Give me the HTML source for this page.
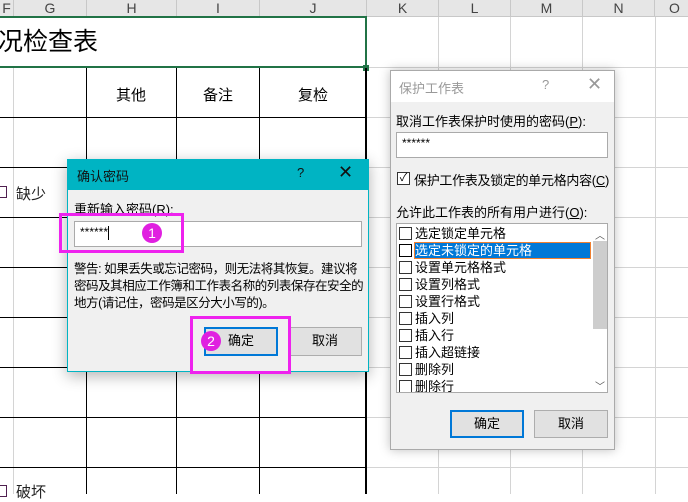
<!DOCTYPE html>
<html><head><meta charset="utf-8"><style>
*{margin:0;padding:0;box-sizing:border-box}
body{width:688px;height:494px;overflow:hidden;background:#fff;position:relative;font-family:"Liberation Sans","Noto Sans CJK SC",sans-serif;font-size:13px;color:#000}
.a{position:absolute;white-space:nowrap}
.hdr{position:absolute;top:0;height:17px;background:#e6e6e6;border-bottom:1px solid #c8c8c8;border-right:1px solid #c8c8c8;text-align:center;font-size:14px;line-height:17px;color:#444}
.vg{position:absolute;width:1px;background:#d4d4d4}
.hg{position:absolute;height:1px;background:#d4d4d4}
.vb{position:absolute;width:1px;background:#000}
.hb{position:absolute;height:1px;background:#000}
.btn{position:absolute;background:#e1e1e1;border:1px solid #adadad;text-align:center;line-height:26px;font-size:13px}
.btn.def{border:2px solid #0078d7;line-height:24px}
.cb{position:absolute;width:13px;height:13px;border:1px solid #333;background:#fff}
.li{position:absolute;left:0;height:17px;width:200px;line-height:17px;font-size:13px}
.pink{position:absolute;border:3px solid #ee22ee}
.num{position:absolute;width:20px;height:20px;border-radius:50%;background:#e020e0;color:#fff;text-align:center;line-height:20px;font-size:14px}
</style></head><body>
<div class="hdr" style="left:0;width:14px">F</div>
<div class="hdr" style="left:14px;width:73px">G</div>
<div class="hdr" style="left:87px;width:90px">H</div>
<div class="hdr" style="left:177px;width:83px">I</div>
<div class="hdr" style="left:260px;width:107px">J</div>
<div class="hdr" style="left:367px;width:72px">K</div>
<div class="hdr" style="left:439px;width:72px">L</div>
<div class="hdr" style="left:511px;width:72px">M</div>
<div class="hdr" style="left:583px;width:72px">N</div>
<div class="hdr" style="left:655px;width:40px">O</div>
<div class="vg" style="left:13px;top:68px;height:426px"></div>
<div class="vg" style="left:438px;top:17px;height:477px"></div>
<div class="vg" style="left:510px;top:17px;height:477px"></div>
<div class="vg" style="left:582px;top:17px;height:477px"></div>
<div class="vg" style="left:655px;top:17px;height:477px"></div>
<div class="hg" style="left:367px;top:67px;width:321px"></div>
<div class="hg" style="left:367px;top:117px;width:321px"></div>
<div class="hg" style="left:367px;top:167px;width:321px"></div>
<div class="hg" style="left:367px;top:217px;width:321px"></div>
<div class="hg" style="left:367px;top:267px;width:321px"></div>
<div class="hg" style="left:367px;top:317px;width:321px"></div>
<div class="hg" style="left:367px;top:367px;width:321px"></div>
<div class="hg" style="left:367px;top:417px;width:321px"></div>
<div class="hg" style="left:367px;top:467px;width:321px"></div>
<div class="a" style="left:-2px;top:27px;font-size:25px;line-height:30px">况检查表</div>
<div class="a" style="left:0;top:16px;width:367px;height:52px;border:2px solid #217346;border-left:none"></div>
<div class="a" style="left:363px;top:65px;width:6px;height:6px;background:#217346"></div>
<div class="vb" style="left:86px;top:68px;height:426px"></div>
<div class="vb" style="left:176px;top:68px;height:426px"></div>
<div class="vb" style="left:259px;top:68px;height:426px"></div>
<div class="vb" style="left:365px;top:68px;height:426px;width:2px"></div>
<div class="hb" style="left:0;top:117px;width:367px"></div>
<div class="hb" style="left:0;top:167px;width:367px"></div>
<div class="hb" style="left:0;top:217px;width:367px"></div>
<div class="hb" style="left:0;top:267px;width:367px"></div>
<div class="hb" style="left:0;top:317px;width:367px"></div>
<div class="hb" style="left:0;top:367px;width:367px"></div>
<div class="hb" style="left:0;top:417px;width:367px"></div>
<div class="hb" style="left:0;top:467px;width:367px"></div>
<div class="a" style="left:116px;top:84px;font-size:15px">其他</div>
<div class="a" style="left:203px;top:84px;font-size:15px">备注</div>
<div class="a" style="left:298px;top:84px;font-size:15px">复检</div>
<div class="a" style="left:-3px;top:186px;width:10px;height:12px;border:1px solid #502050"></div>
<div class="a" style="left:16px;top:183px;font-size:15px;color:#222">缺少</div>
<div class="a" style="left:-3px;top:485px;width:10px;height:12px;border:1px solid #502050"></div>
<div class="a" style="left:16px;top:481px;font-size:15px;color:#222">破坏</div>

<div class="a" style="left:390px;top:70px;width:225px;height:380px;background:#f0f0f0;border:1px solid #aaa;box-shadow:0 0 10px rgba(0,0,0,.25)">
 <div class="a" style="left:0;top:0;width:223px;height:31px;background:#fff"></div>
 <div class="a" style="left:8px;top:7px;color:#999">保护工作表</div>
 <div class="a" style="left:151px;top:6px;color:#999">?</div>
 <div class="a" style="left:196px;top:3px;color:#999;font-size:18px">✕</div>
 <div class="a" style="left:5px;top:40px">取消工作表保护时使用的密码(<u>P</u>):</div>
 <div class="a" style="left:5px;top:61px;width:212px;height:26px;background:#fff;border:1px solid #aaa;padding:3px 0 0 5px;font-size:12px">******</div>
 <div class="cb" style="left:6px;top:101px;font-size:11px;line-height:11px;text-align:center">✓</div>
 <div class="a" style="left:23px;top:99px;letter-spacing:-0.3px">保护工作表及锁定的单元格内容(<u>C</u>)</div>
 <div class="a" style="left:5px;top:131px">允许此工作表的所有用户进行(<u>O</u>):</div>
 <div class="a" style="left:5px;top:152px;width:212px;height:170px;background:#fff;border:1px solid #aaa;overflow:hidden">
  <div class="a" style="left:196px;top:17px;width:14px;height:88px;background:#cdcdcd"></div>
  <div class="a" style="left:198px;top:3px;font-size:10px;color:#555">︿</div>
  <div class="a" style="left:198px;top:154px;font-size:10px;color:#555">﹀</div>
  <div class="li" style="top:1px"><span class="cb" style="left:2px;top:2px"></span><span class="a" style="left:18px">选定锁定单元格</span></div>
  <div class="a" style="left:17px;top:18px;width:177px;height:17px;background:#0078d7;border:1px solid #f08030"></div>
  <div class="li" style="top:18px"><span class="cb" style="left:2px;top:2px;border-color:#000"></span><span class="a" style="left:18px;color:#fff">选定未锁定的单元格</span></div>
  <div class="li" style="top:35px"><span class="cb" style="left:2px;top:2px"></span><span class="a" style="left:18px">设置单元格格式</span></div>
  <div class="li" style="top:52px"><span class="cb" style="left:2px;top:2px"></span><span class="a" style="left:18px">设置列格式</span></div>
  <div class="li" style="top:69px"><span class="cb" style="left:2px;top:2px"></span><span class="a" style="left:18px">设置行格式</span></div>
  <div class="li" style="top:86px"><span class="cb" style="left:2px;top:2px"></span><span class="a" style="left:18px">插入列</span></div>
  <div class="li" style="top:103px"><span class="cb" style="left:2px;top:2px"></span><span class="a" style="left:18px">插入行</span></div>
  <div class="li" style="top:120px"><span class="cb" style="left:2px;top:2px"></span><span class="a" style="left:18px">插入超链接</span></div>
  <div class="li" style="top:137px"><span class="cb" style="left:2px;top:2px"></span><span class="a" style="left:18px">删除列</span></div>
  <div class="li" style="top:154px"><span class="cb" style="left:2px;top:2px"></span><span class="a" style="left:18px">删除行</span></div>
 </div>
 <div class="btn def" style="left:59px;top:339px;width:74px;height:28px">确定</div>
 <div class="btn" style="left:143px;top:339px;width:74px;height:28px">取消</div>
</div>

<div class="a" style="left:67px;top:159px;width:302px;height:213px;background:#f0f0f0;border:1px solid #00b4c3;box-shadow:0 4px 14px rgba(0,0,0,.3)">
 <div class="a" style="left:0;top:0;width:300px;height:30px;background:#00b4c3"></div>
 <div class="a" style="left:9px;top:6px;color:#111">确认密码</div>
 <div class="a" style="left:229px;top:5px;color:#111">?</div>
 <div class="a" style="left:270px;top:2px;font-size:18px;color:#111">✕</div>
 <div class="a" style="left:6px;top:39px">重新输入密码(R):</div>
 <div class="a" style="left:6px;top:61px;width:288px;height:26px;background:#fff;border:1px solid #aaa;padding:3px 0 0 5px;font-size:12px">******<span style="display:inline-block;width:1px;height:14px;background:#000;vertical-align:-4px"></span></div>
 <div class="a" style="left:6px;top:101px;line-height:17px;font-size:12.5px;letter-spacing:-0.45px">警告: 如果丢失或忘记密码，则无法将其恢复。建议将<br>密码及其相应工作簿和工作表名称的列表保存在安全的<br>地方(请记住，密码是区分大小写的)。</div>
 <div class="btn def" style="left:136px;top:167px;width:74px;height:29px">确定</div>
 <div class="btn" style="left:220px;top:167px;width:74px;height:29px">取消</div>
</div>
<div class="pink" style="left:59px;top:213px;width:125px;height:40px"></div>
<div class="num" style="left:142px;top:223px">1</div>
<div class="pink" style="left:190px;top:316px;width:101px;height:58px"></div>
<div class="num" style="left:201px;top:331px">2</div>
</body></html>
